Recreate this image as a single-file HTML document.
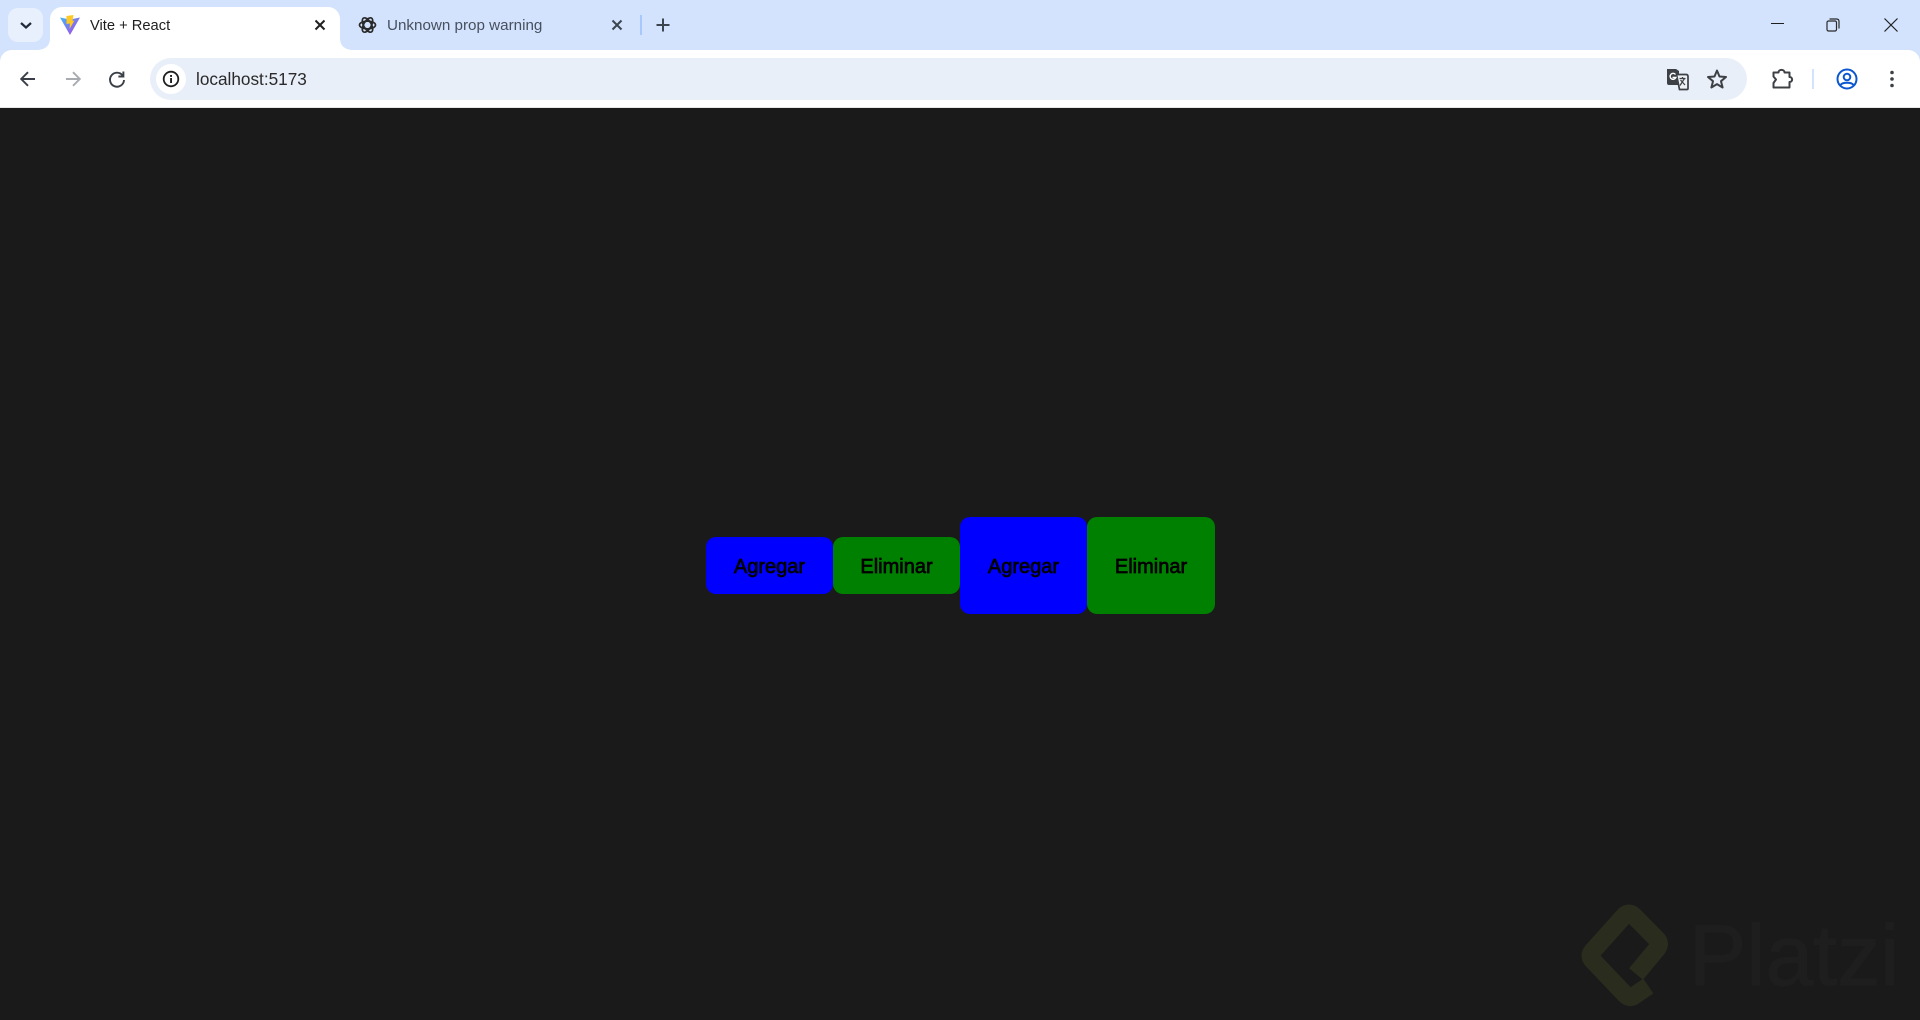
<!DOCTYPE html>
<html lang="en">
<head>
<meta charset="utf-8">
<title>Vite + React</title>
<style>
html,body{margin:0;padding:0;width:1920px;height:1020px;overflow:hidden;background:#1a1a1a;font-family:"Liberation Sans",sans-serif}
.a{position:absolute}
svg{position:absolute;overflow:visible}
.btn{position:absolute;width:127px;border-radius:10px;color:#000;font-size:20px;font-weight:400;-webkit-text-stroke:.7px #000;text-align:center;display:flex;align-items:center;justify-content:center;padding-top:3px;box-sizing:border-box}
</style>
</head>
<body>
<div class="a" style="left:0;top:0;width:1920px;height:70px;background:#d3e3fd"></div>
<div class="a" style="left:8px;top:8px;width:35px;height:34px;border-radius:10px;background:#e9f0fd"></div>
<svg style="left:0;top:0" width="50" height="50"><path d="M21 23l5 4.500 5-4.500" fill="none" stroke="#1f2a3a" stroke-width="2.200"/></svg>
<!-- active tab -->
<div class="a" style="left:50px;top:7px;width:290px;height:50px;background:#fff;border-radius:12px 12px 0 0"></div>
<svg style="left:0;top:0" width="360" height="60">
<path d="M36 50h14V38C50 46 45 50 36 50z" fill="#fff"/>
<path d="M354 50h-14V38C340 46 345 50 354 50z" fill="#fff"/>
</svg>
<svg style="left:60px;top:15px" width="20" height="20" viewBox="0 0 20 20">
<defs><linearGradient id="v" x1="0" y1="0" x2="1" y2="1"><stop offset="0" stop-color="#41b6f5"/><stop offset="1" stop-color="#b13ee6"/></linearGradient></defs>
<path d="M0 2.500L10 20 20 2.500 10 4.500z" fill="url(#v)"/>
<path d="M6.500 1L13.500 0 12.500 6 14.500 5.500 9.500 14 10 8.500 6.500 9z" fill="#ffc824"/>
</svg>
<div class="a" style="left:90px;top:17px;font-size:14.7px;line-height:18px;color:#1f1f1f;white-space:nowrap">Vite + React</div>
<svg style="left:310px;top:15px" width="20" height="20"><path d="M5.500 5.500l9 9M14.500 5.500l-9 9" stroke="#1f1f1f" stroke-width="2"/></svg>
<!-- inactive tab -->
<svg style="left:358px;top:16px" width="19" height="18" viewBox="0 0 19 18" fill="none" stroke="#2a2a2a" stroke-width="1.700">
<g transform="translate(9.500 9)">
<ellipse rx="8" ry="3.800"/>
<ellipse rx="8" ry="3.800" transform="rotate(60)"/>
<ellipse rx="8" ry="3.800" transform="rotate(120)"/>
</g>
</svg>
<div class="a" style="left:387px;top:17px;font-size:15.200px;line-height:18px;color:#47505e;white-space:nowrap">Unknown prop warning</div>
<svg style="left:607px;top:15px" width="20" height="20"><path d="M5.500 5.500l9 9M14.500 5.500l-9 9" stroke="#3c4450" stroke-width="2"/></svg>
<div class="a" style="left:640px;top:15px;width:2px;height:20px;background:#a8c7fa"></div>
<svg style="left:653px;top:15px" width="20" height="20"><path d="M10 3.500v13M3.500 10h13" stroke="#3c4450" stroke-width="2"/></svg>
<!-- window controls -->
<div class="a" style="left:1771px;top:23px;width:13px;height:1px;background:#1f1f1f"></div>
<svg style="left:1825px;top:17px" width="16" height="16" fill="none" stroke="#2a2a2a" stroke-width="1.200"><rect x="2" y="4" width="9.500" height="10" rx="1.500"/><path d="M4.500 2H11.500Q14 2 14 4.500V11.500"/></svg>
<svg style="left:1883px;top:17px" width="16" height="16"><path d="M1.500 1.500l13 13M14.500 1.500l-13 13" stroke="#1f1f1f" stroke-width="1.200"/></svg>
<!-- toolbar -->
<div class="a" style="left:0;top:50px;width:1920px;height:57px;background:#fff;border-radius:12px 12px 0 0"></div>
<div class="a" style="left:0;top:107px;width:1920px;height:1px;background:#e8e8e8"></div>
<svg style="left:18px;top:69px" width="20" height="20" fill="none" stroke="#3a3f47" stroke-width="1.900"><path d="M17 10H3.500M10 3.200L3.200 10l6.800 6.800"/></svg>
<svg style="left:63px;top:69px" width="20" height="20" fill="none" stroke="#a8abb0" stroke-width="1.900"><path d="M3 10h13.500M10 3.200l6.800 6.800-6.800 6.800"/></svg>
<svg style="left:107px;top:69px" width="20" height="20" fill="none" stroke="#3a3f47" stroke-width="1.900"><path d="M15.600 6.500A7 7 0 1 0 17 11"/><path d="M16.400 2.500v5h-5"/></svg>
<div class="a" style="left:150px;top:58px;width:1597px;height:42px;border-radius:21px;background:#e9eff9"></div>
<div class="a" style="left:156px;top:64px;width:30px;height:30px;border-radius:50%;background:#fff"></div>
<svg style="left:161px;top:69px" width="20" height="20"><circle cx="10" cy="10" r="7.300" fill="none" stroke="#1f1f1f" stroke-width="1.800"/><rect x="9.100" y="9" width="1.900" height="5" fill="#1f1f1f"/><rect x="9.100" y="6" width="1.900" height="1.900" fill="#1f1f1f"/></svg>
<div class="a" style="left:196px;top:69px;font-size:17.200px;line-height:20px;color:#2a2a2a;white-space:nowrap">localhost:5173</div>
<svg style="left:1666px;top:68px" width="24" height="24">
<path d="M1 1h9l3 2v14H3q-2 0-2-2z" fill="#3d4145"/>
<path d="M10.500 6.500h9.500q2 0 2 2v12q0 1-1 1h-7.500z" fill="#eef1f6" stroke="#3d4145" stroke-width="1.700"/>
<path d="M13.500 10.500h6M16.500 9v1.500M14 17.500l4.500-7M14.500 12l4.500 5" stroke="#3d4145" stroke-width="1.200" fill="none"/>
<path d="M9.500 6.500a3 3 0 1 0 .4 3H6.500" fill="none" stroke="#fff" stroke-width="1.400"/>
</svg>
<svg style="left:1706px;top:68px" width="22" height="22"><path d="M11 2.500l2.500 6 6.500.5-5 4.200 1.600 6.300L11 16.100 5.400 19.500 7 13.200 2 9l6.500-.5z" fill="none" stroke="#3d4145" stroke-width="2" stroke-linejoin="round"/></svg>
<svg style="left:1771px;top:68px" width="22" height="22"><path d="M2.500 4.500H7.500C7.500 1 13.500 1 13.500 4.500H18.500V9C22 9 22 14 18.500 14V19.500H2.500V15L5 11.500 2.500 8.500z" fill="none" stroke="#3d4145" stroke-width="2" stroke-linejoin="round"/></svg>
<div class="a" style="left:1812px;top:69px;width:2px;height:20px;background:#d3e3fd"></div>
<svg style="left:1836px;top:68px" width="22" height="22" fill="none" stroke="#0b57d0" stroke-width="2"><circle cx="11" cy="11" r="9.500"/><circle cx="11" cy="9" r="3.300"/><path d="M4.500 17c2-3 11-3 13 0"/></svg>
<svg style="left:1882px;top:69px" width="20" height="20" fill="#3d4145"><circle cx="10" cy="3.500" r="1.800"/><circle cx="10" cy="10" r="1.800"/><circle cx="10" cy="16.500" r="1.800"/></svg>
<!-- page -->
<div class="a" style="left:0;top:108px;width:1920px;height:912px;background:#1a1a1a"></div>
<div class="btn" style="left:706px;top:537px;height:57px;background:#0000ff">Agregar</div>
<div class="btn" style="left:833px;top:537px;height:57px;background:#008000">Eliminar</div>
<div class="btn" style="left:960px;top:517px;height:97px;background:#0000ff">Agregar</div>
<div class="btn" style="left:1087px;top:517px;height:97px;width:128px;background:#008000">Eliminar</div>
<!-- watermark -->
<svg style="left:1560px;top:890px" width="360" height="130" viewBox="0 0 1080 390">
<path d="M228 252L292 175Q303 160 290 147L222 78Q207 63 192 78L98 183Q85 197 98 211L196 314Q210 328 224 316L265 288" fill="none" stroke="#2a2c1e" stroke-width="54" stroke-linejoin="round"/>
</svg>
<div class="a" style="left:1689px;top:906px;font-size:86px;line-height:100px;color:#1e1e1e;-webkit-text-stroke:1px #1e1e1e;white-space:nowrap">Platzi</div>
</body>
</html>
